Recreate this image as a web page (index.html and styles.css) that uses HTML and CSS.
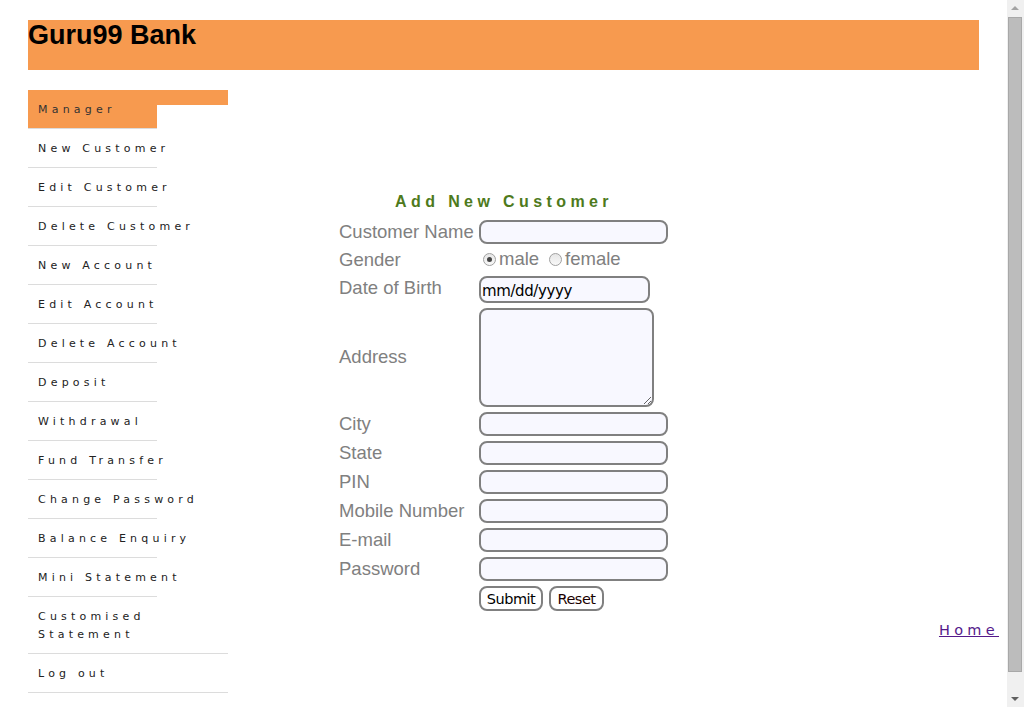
FILE: index.html
```html
<!DOCTYPE html>
<html>
<head>
<meta charset="utf-8">
<title>Guru99 Bank</title>
<link rel="stylesheet" href="styles.css">
</head>
<body>
<div class="page">
  <div class="header"><h1 class="brand">Guru99 Bank</h1></div>
  <div class="layout">
    <ul class="menu">
      <li class="menu-item manager"><span>Manager</span></li>
      <li class="menu-item"><a href="#">New Customer</a></li>
      <li class="menu-item"><a href="#">Edit Customer</a></li>
      <li class="menu-item"><a href="#">Delete Customer</a></li>
      <li class="menu-item"><a href="#">New Account</a></li>
      <li class="menu-item"><a href="#">Edit Account</a></li>
      <li class="menu-item"><a href="#">Delete Account</a></li>
      <li class="menu-item"><a href="#">Deposit</a></li>
      <li class="menu-item"><a href="#">Withdrawal</a></li>
      <li class="menu-item"><a href="#">Fund Transfer</a></li>
      <li class="menu-item"><a href="#">Change Password</a></li>
      <li class="menu-item"><a href="#">Balance Enquiry</a></li>
      <li class="menu-item"><a href="#">Mini Statement</a></li>
      <li class="menu-item wide"><a href="#">Customised Statement</a></li>
      <li class="menu-item wide"><a href="#">Log out</a></li>
    </ul>
    <div class="main">
      <form class="form">
        <div class="form-title">Add New Customer</div>
        <div class="row first">
          <label class="lbl">Customer Name</label>
          <input class="field" type="text">
        </div>
        <div class="row gender">
          <label class="lbl">Gender</label>
          <div class="radios">
            <span class="radio checked"></span><span class="opt">male</span>
            <span class="radio"></span><span class="opt">female</span>
          </div>
        </div>
        <div class="row dob">
          <label class="lbl">Date of Birth</label>
          <input class="field date" type="text" value="mm/dd/yyyy">
        </div>
        <div class="row">
          <label class="lbl">Address</label>
          <textarea class="field area"></textarea>
        </div>
        <div class="row">
          <label class="lbl">City</label>
          <input class="field" type="text">
        </div>
        <div class="row">
          <label class="lbl">State</label>
          <input class="field" type="text">
        </div>
        <div class="row">
          <label class="lbl">PIN</label>
          <input class="field" type="text">
        </div>
        <div class="row">
          <label class="lbl">Mobile Number</label>
          <input class="field" type="text">
        </div>
        <div class="row">
          <label class="lbl">E-mail</label>
          <input class="field" type="text">
        </div>
        <div class="row">
          <label class="lbl">Password</label>
          <input class="field" type="password">
        </div>
        <div class="row">
          <span class="lbl"></span>
          <div class="buttons">
            <button type="button" class="btn">Submit</button>
            <button type="button" class="btn reset">Reset</button>
          </div>
        </div>
      </form>
      <div class="home-row"><a class="home" href="#">Home</a></div>
    </div>
  </div>
</div>
<div class="scrollbar">
  <div class="sb-arrow up"></div>
  <div class="sb-thumb"></div>
  <div class="sb-arrow down"></div>
</div>
</body>
</html>
```

FILE: styles.css
```css
html, body {
  margin: 0;
  padding: 0;
  background: #fff;
  overflow: hidden;
}
.page {
  padding: 20px 26px 0 28px;
  width: 970px;
}
.header {
  width: 951px;
  height: 50px;
  background: #f79a4f;
}
.brand {
  margin: 0;
  font-family: "Liberation Sans", Arial, sans-serif;
  font-weight: bold;
  font-size: 27px;
  line-height: 31px;
  color: #000;
}
.layout {
  display: flex;
  margin-top: 20px;
}
.menu {
  list-style: none;
  margin: 0;
  padding: 0;
  width: 200px;
  flex: none;
}
.menu-item {
  width: 129px;
  border-bottom: 1px solid #dcdcdc;
  font-family: "DejaVu Sans", Verdana, sans-serif;
  font-size: 11px;
  letter-spacing: 4.2px;
  line-height: 18px;
  white-space: nowrap;
}
.menu-item a, .menu-item span {
  display: block;
  padding: 11px 0 9px 10px;
  color: #222;
  text-decoration: none;
}
.manager {
  width: 200px;
  border-bottom: none;
  background:
    linear-gradient(#f79a4f, #f79a4f) 0 0 / 100% 15px no-repeat,
    linear-gradient(#f79a4f, #f79a4f) 0 0 / 129px 38px no-repeat;
}
.manager span {
  width: 119px;
  border-bottom: 1px solid #dcdcdc;
  color: #333;
}
.menu-item.wide {
  width: 200px;
  white-space: normal;
}
.main {
  flex: 1;
  display: flex;
  flex-direction: column;
}
.form {
  margin: 101px 0 0 111px;
  width: 330px;
  display: flex;
  flex-direction: column;
  gap: 5px;
}
.form-title {
  text-align: center;
  font-family: "Liberation Sans", Arial, sans-serif;
  font-weight: bold;
  font-size: 16px;
  letter-spacing: 4.4px;
  line-height: 20px;
  color: #4e7a1c;
  margin-top: 1px;
}
.row.first {
  margin-top: 3px;
}
.row {
  display: flex;
  align-items: center;
}
.lbl {
  width: 140px;
  flex: none;
  font-family: "Liberation Sans", Arial, sans-serif;
  font-size: 18.5px;
  line-height: 21px;
  color: #808080;
  margin-top: -2px;
}
.field {
  box-sizing: border-box;
  width: 189px;
  height: 24px;
  border: 2px solid #808080;
  border-radius: 8px;
  background: #f8f8ff;
  padding: 0 2px;
  margin: 0;
  font-family: "DejaVu Sans", Tahoma, sans-serif;
  font-size: 15px;
  color: #000;
  outline: none;
}
.field.date {
  width: 171px;
  height: 27px;
  padding: 2px 1px 0;
  letter-spacing: -0.4px;
}
.field.area {
  width: 175px;
  height: 99px;
  resize: both;
  display: block;
}
.gender {
  height: 22px;
}
.dob .lbl {
  align-self: flex-start;
  margin-top: 1px;
}
.radios {
  display: flex;
  align-items: center;
  font-family: "Liberation Sans", Arial, sans-serif;
  font-size: 18.5px;
  color: #808080;
  margin-top: -2px;
}
.radio {
  box-sizing: border-box;
  width: 13px;
  height: 13px;
  border-radius: 50%;
  border: 1px solid #a0a0a0;
  background: linear-gradient(#e6e6e6, #f8f8f8);
  margin: 0 3px 0 4px;
  position: relative;
}
.radio.checked::after {
  content: "";
  position: absolute;
  left: 3px;
  top: 3px;
  width: 5px;
  height: 5px;
  border-radius: 50%;
  background: #444;
}
.opt {
  margin-right: 6px;
}
.buttons {
  display: flex;
  gap: 6px;
}
.btn {
  box-sizing: border-box;
  height: 25px;
  padding: 0 2px;
  border: 2px solid #808080;
  border-radius: 8px;
  background: #fff;
  font-family: "DejaVu Sans", Tahoma, sans-serif;
  font-size: 14.5px;
  letter-spacing: -0.5px;
  color: #000;
  width: 64px;
}
.btn.reset {
  width: 55px;
  color: #1a0000;
}
.home-row {
  display: flex;
  justify-content: flex-end;
  margin-top: 9px;
  margin-right: -1px;
}
.home {
  font-family: "DejaVu Sans", "Comic Sans MS", sans-serif;
  font-size: 14.5px;
  letter-spacing: 4.3px;
  color: #551a8b;
  line-height: 20px;
  white-space: nowrap;
}
.scrollbar {
  position: fixed;
  top: 0;
  right: 0;
  width: 17px;
  height: 707px;
  background: #f0f0f0;
  display: flex;
  flex-direction: column;
}
.sb-arrow {
  height: 17px;
  flex: none;
  position: relative;
}
.sb-arrow::after {
  content: "";
  position: absolute;
  left: 4px;
  width: 0;
  height: 0;
  border-left: 4px solid transparent;
  border-right: 4px solid transparent;
}
.sb-arrow.up::after {
  top: 6px;
  border-bottom: 4px solid #a3a3a3;
}
.sb-arrow.down::after {
  top: 7px;
  border-top: 4px solid #606060;
}
.sb-thumb {
  flex: 1;
  margin: 0 2px 0 1px;
  background: #bcbcbc;
  border: 1px solid #a8a8a8;
  box-sizing: border-box;
  margin-bottom: 18px;
}
```
